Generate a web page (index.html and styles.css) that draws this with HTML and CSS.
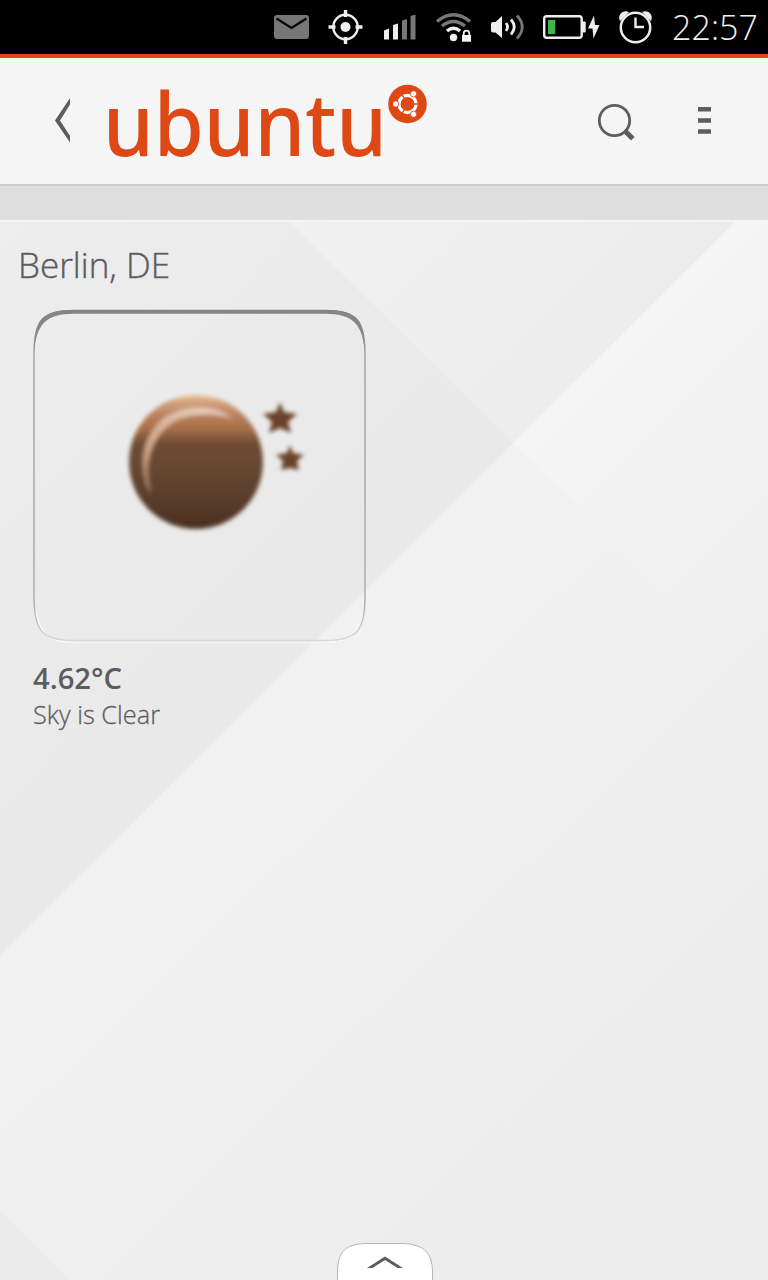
FILE: index.html
```html
<!DOCTYPE html>
<html lang="en">
<head>
<meta charset="utf-8">
<title>Weather scope</title>
<link rel="stylesheet" href="styles.css">
</head>
<body>
<div class="screen">
  <div class="status">
    <svg class="indicators" width="400" height="54" viewBox="264 0 400 54">
      <rect x="274" y="15" width="35" height="24" rx="3" fill="#777"/>
      <path d="M276.500 18.500L291.500 28L306.500 18.500" fill="none" stroke="#000" stroke-width="2.300"/>
      <g fill="none" stroke="#eee" stroke-width="2.400"><circle cx="345.500" cy="27" r="12.200"/><path stroke-width="3.400" d="M345.500 10v7M345.500 37v7M328.500 27h7M355.500 27h7"/></g>
      <circle cx="345.500" cy="27" r="5" fill="#eee"/>
      <path fill="#eee" d="M384 30.500l5-2v11h-5zM393 25l5-1.500v16h-5z"/><path fill="#777" d="M402 20.500l5-1.500v20.500h-5zM410.500 16l5-1.500v25h-5z"/>
      <g fill="none" stroke-width="3.400"><path stroke="#777" d="M437 21.500Q453.500 8 470 21.500M442 26Q453.500 17 465 26"/><path stroke="#eee" d="M447 31Q453.500 25.500 460 31"/></g>
      <circle cx="453.500" cy="37.500" r="3.700" fill="#eee"/>
      <rect x="462" y="35" width="9" height="6.700" fill="#fff"/><path d="M463.700 36v-2.500a2.800 2.800 0 0 1 5.600 0V36" fill="none" stroke="#fff" stroke-width="1.700"/>
      <path fill="#eee" d="M491 24q0-2 2-2h2.500L502 16v22l-6.500-5.500H493q-2 0-2-2z"/>
      <g fill="none" stroke-width="2.800"><path stroke="#eee" d="M506 23q3 4 0 8M511 19.500q6.500 7.500 0 15"/><path stroke="#777" d="M517 15.500q10.500 11.500 0 23"/></g>
      <rect x="544.200" y="16.200" width="37.500" height="21.500" rx="2.500" fill="none" stroke="#eee" stroke-width="2.400"/>
      <rect x="548" y="20" width="7.200" height="14" fill="#3fb54b"/><rect x="582" y="21.500" width="3.700" height="11" rx="1" fill="#eee"/>
      <path fill="#eee" d="M594 15.500L588 28.500h4.500L593.500 38.500l6-13.500h-4.500z"/>
      <circle cx="635.500" cy="27.500" r="14.700" fill="none" stroke="#eee" stroke-width="2.500"/>
      <path fill="#eee" d="M620 21c-3-6 3-12 9-9zM651 21c3-6-3-12-9-9z"/>
      <path d="M635.500 17.500V27h8.500" fill="none" stroke="#eee" stroke-width="2.400"/>
    </svg>
    <svg class="clock" width="86" height="54"><text x="0" y="40" textLength="86">22:57</text></svg>
  </div>
  <div class="header">
    <svg width="768" height="126" viewBox="0 58 768 126">
      <path fill="#5d5d5d" d="M70 98v6.500L60 120.500l10 15.500v6.500L55 120.500z"/>
      <text class="brand" x="103" y="156" textLength="284" lengthAdjust="spacingAndGlyphs">ubuntu</text>
      <circle cx="407.500" cy="104" r="19.300" fill="#dd4814"/>
      <circle cx="407.500" cy="104" r="8.500" fill="none" stroke="#fff" stroke-width="3.400"/>
      <path d="M407.500 104h12M407.500 104l-6-10.400M407.500 104l-6 10.400" stroke="#dd4814" stroke-width="1.300"/>
      <circle cx="407.500" cy="104" r="6.800" fill="#dd4814"/>
      <g fill="#fff" stroke="#dd4814" stroke-width=".8"><circle cx="395.800" cy="104" r="3.100"/><circle cx="413.500" cy="93.800" r="3.100"/><circle cx="413.500" cy="114.200" r="3.100"/></g>
      <circle cx="614.500" cy="120.500" r="15.200" fill="none" stroke="#5d5d5d" stroke-width="2.800"/>
      <path d="M625 131l7.800 7.800" stroke="#5d5d5d" stroke-width="5"/>
      <path d="M698 109.300h13M698 120.500h13M698 131.500h13" stroke="#5d5d5d" stroke-width="4.400"/>
    </svg>
  </div>
  <div class="band"></div>
  <main class="content">
    <h1><svg width="160" height="44"><text x="0" y="32" textLength="152" lengthAdjust="spacingAndGlyphs">Berlin, DE</text></svg></h1>
    <div class="card">
      <svg class="frame" width="336" height="336" viewBox="32 308 336 336">
        <defs>
          <linearGradient id="edge" x1="0" y1="0" x2="0" y2="1"><stop offset="0" stop-color="#858585"/><stop offset=".1" stop-color="#a0a0a0"/><stop offset=".88" stop-color="#aaa"/><stop offset="1" stop-color="#d8d8d8"/></linearGradient>
          <linearGradient id="orb" x1="0" y1="0" x2="0" y2="1"><stop offset="0" stop-color="#f0c398"/><stop offset=".06" stop-color="#cf9f7c"/><stop offset=".15" stop-color="#b9825c"/><stop offset=".25" stop-color="#a87049"/><stop offset=".36" stop-color="#6f4c33"/><stop offset=".7" stop-color="#5e412e"/><stop offset="1" stop-color="#4b3022"/></linearGradient>
          <linearGradient id="shine" x1="0" y1="1" x2=".6" y2="0"><stop offset="0" stop-color="#8a5a3b"/><stop offset=".35" stop-color="#cb9d80"/><stop offset="1" stop-color="#e5cbbb"/></linearGradient>
          <filter id="soft"><feGaussianBlur stdDeviation="2"/></filter><filter id="thin"><feGaussianBlur stdDeviation=".5"/></filter>
        </defs>
        <path d="M36 612C40 635 51 642.500 74 642.500H325C348 642.500 360 635 364 612" fill="none" stroke="#f8f8f8" stroke-width="1.500"/>
        <path d="M74 310.500H325C357 310.500 365 320 365 354V597C365 631 357 640.500 325 640.500H74C42 640.500 34 631 34 597V354C34 320 42 310.500 74 310.500Z" fill="none" stroke="url(#edge)" stroke-width="1.400"/>
        <path d="M34 354C34 320 42 310 74 310H325C357 310 365 320 365 354C363 325 354 313.700 325 313.700H74C45 313.700 36 325 34 354Z" fill="#858585" filter="url(#thin)"/>
        <g filter="url(#soft)">
          <circle cx="196" cy="462" r="67" fill="url(#orb)"/>
          <path d="M150 492C136 463 145 434 163 419C185 402 216 405 232 418C212 412 183 413 169 425C149 441 144 465 150 492Z" fill="url(#shine)" stroke="#d3a486" stroke-opacity=".5" stroke-width="1.500"/>
          <path fill="#6b432c" d="M280 402l4 10 13 2-9 8 3 11-11-5-11 5 3-11-9-8 13-2zM290 445l3 8 11 2-7 6 2 9-9-2-9 2 2-9-7-6 11-2z"/>
        </g>
      </svg>
      <svg class="caption" width="160" height="80"><text class="temp" x="1" y="31" textLength="89" lengthAdjust="spacingAndGlyphs">4.62°C</text><text class="sky" x="1" y="66" textLength="127" lengthAdjust="spacingAndGlyphs">Sky is Clear</text></svg>
    </div>
    <div class="handle"><svg width="100" height="40"><path d="M2.500 40V31C3 11 11 3.500 33 3.500H65C87 3.500 97 11 97.500 31V40" fill="#fff" stroke="#b5b5b5" stroke-width="1"/><path d="M32 28L50 16.500 68 28h-5.500L50 20 37.500 28z" fill="#5d5d5d"/></svg></div>
  </main>
  <svg class="backdrop" width="768" height="1058" viewBox="0 222 768 1058">
    <defs>
      <linearGradient id="base" gradientUnits="userSpaceOnUse" x1="0" y1="222" x2="370" y2="590"><stop offset="0" stop-color="#ededed"/><stop offset="1" stop-color="#e9e9e9"/></linearGradient>
      <linearGradient id="light" gradientUnits="userSpaceOnUse" x1="370" y1="590" x2="768" y2="1000"><stop offset="0" stop-color="#f1f1f1"/><stop offset="1" stop-color="#ececec"/></linearGradient>
      <linearGradient id="facet" gradientUnits="userSpaceOnUse" x1="290" y1="222" x2="512" y2="443"><stop offset="0" stop-color="#f0f0f0"/><stop offset="1" stop-color="#ececec"/></linearGradient>
      <linearGradient id="glow" gradientUnits="userSpaceOnUse" x1="512" y1="443" x2="690" y2="621"><stop offset="0" stop-color="#fff" stop-opacity=".28"/><stop offset="1" stop-color="#fff" stop-opacity="0"/></linearGradient>
    </defs>
    <rect y="222" width="768" height="1058" fill="url(#base)"/>
    <path d="M290 222H735L512 443Z" fill="url(#facet)"/>
    <path d="M735 222H768V1280H0V955Z" fill="url(#light)"/>
    <path d="M735 222H768V699L512 443Z" fill="url(#glow)"/>
    <path d="M0 1210L70 1280H0Z" fill="#ebebeb"/>
  </svg>
</div>
</body>
</html>
```
FILE: styles.css
```css
body { margin: 0; font-family: "Open Sans", "Noto Sans", sans-serif; }
svg { display: block; overflow: visible; }
.screen { position: relative; width: 768px; height: 1280px; display: flex; flex-direction: column; overflow: hidden; }
.status { height: 54px; background: #000; border-bottom: 4px solid #dd4814; display: flex; justify-content: flex-end; gap: 8px; padding-right: 10px; }
.clock { font-size: 34px; font-weight: 300; fill: #eee; }
.header { height: 126px; background: #f5f5f5; border-bottom: 2px solid #ccc; }
.brand { font-family: "Noto Sans", sans-serif; font-size: 88px; font-weight: 500; fill: #dd4814; }
.band { height: 34px; background: #dfdfdf; border-bottom: 2px solid #f6f6f6; }
.content { flex: 1; display: flex; flex-direction: column; }
h1 { margin: 24px 0 0 18px; height: 44px; font-size: 34px; font-weight: 300; fill: #5d5d5d; stroke: #5d5d5d; stroke-width: .4px; }
.card { margin: 18px 0 0 32px; display: flex; flex-direction: column; gap: 14px; }
.temp { font-size: 29px; font-weight: 600; fill: #5d5d5d; }
.sky { font-size: 26px; font-weight: 300; fill: #5d5d5d; stroke: #5d5d5d; stroke-width: .3px; }
.handle { margin: auto auto 0; padding-left: 2px; }
.backdrop { position: absolute; left: 0; top: 222px; z-index: -1; }
```
